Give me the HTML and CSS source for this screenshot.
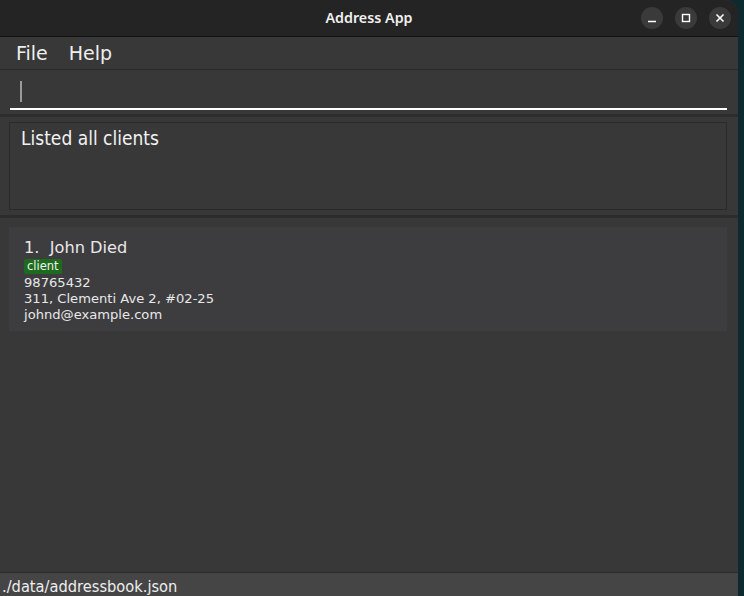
FILE: index.html
```html
<!DOCTYPE html>
<html>
<head>
<meta charset="utf-8">
<link rel="stylesheet" href="styles.css">
</head>
<body>
<div class="window">
  <div class="titlebar">
    <div class="title">Address App</div>
    <div class="controls">
      <div class="ctl"><svg width="22" height="22" viewBox="0 0 22 22"><line x1="7" y1="14.5" x2="15" y2="14.5" stroke="#fff" stroke-width="1.6"/></svg></div>
      <div class="ctl"><svg width="22" height="22" viewBox="0 0 22 22"><rect x="7.5" y="7.5" width="7" height="7" fill="none" stroke="#fff" stroke-width="1.4"/></svg></div>
      <div class="ctl"><svg width="22" height="22" viewBox="0 0 22 22"><path d="M7.5 7.5 L14.5 14.5 M14.5 7.5 L7.5 14.5" stroke="#fff" stroke-width="1.6"/></svg></div>
    </div>
  </div>
  <div class="menubar">
    <span class="menu">File</span>
    <span class="menu">Help</span>
  </div>
  <div class="command">
    <div class="field"><span class="caret"></span></div>
  </div>
  <div class="result-wrap">
    <div class="result">Listed all clients</div>
  </div>
  <div class="list">
    <div class="card">
      <div class="name">1.&nbsp; John Died</div>
      <div class="tags"><span class="tag">client</span></div>
      <div class="line">98765432</div>
      <div class="line">311, Clementi Ave 2, #02-25</div>
      <div class="line">johnd@example.com</div>
    </div>
  </div>
  <div class="status">./data/addressbook.json</div>
</div>
</body>
</html>
```
FILE: styles.css
```css
html, body {
  margin: 0;
  padding: 0;
  height: 100%;
}
body {
  background: #0c2a2f;
  font-family: "DejaVu Sans", sans-serif;
  color: #fff;
  overflow: hidden;
}
.window {
  width: 738px;
  height: 596px;
  display: flex;
  flex-direction: column;
  background: #383838;
  border-top-right-radius: 12px;
  overflow: hidden;
}
.titlebar {
  height: 36px;
  flex: none;
  background: #242424;
  border-bottom: 1px solid #111;
  display: flex;
  align-items: center;
  justify-content: center;
  position: relative;
}
.title {
  font-family: "Noto Sans", sans-serif;
  font-weight: 600;
  font-size: 14.3px;
  color: #f0f0f0;
  margin-top: -2px;
}
.controls {
  position: absolute;
  right: 7px;
  top: 7px;
  display: flex;
  gap: 12px;
}
.ctl {
  width: 22px;
  height: 22px;
  border-radius: 50%;
  background: #3a3a3a;
}
.ctl svg { display: block; }
.menubar {
  height: 32px;
  flex: none;
  display: flex;
  align-items: center;
  gap: 21px;
  padding-left: 16px;
  border-bottom: 1px solid #2a2a2a;
  background: #383838;
}
.menu {
  font-family: "DejaVu Sans", sans-serif;
  font-size: 19px;
  color: #eee;
}
.command {
  flex: none;
  padding: 0 11px 0 10px;
  border-bottom: 3px solid #2c2c2c;
  box-sizing: border-box;
  height: 47px;
}
.field {
  height: 40px;
  border-bottom: 2px solid #fff;
  box-sizing: border-box;
  display: flex;
  align-items: center;
  padding-left: 10px;
}
.caret {
  width: 2px;
  height: 21px;
  background: #9a9a9a;
  margin-top: 5px;
}
.result-wrap {
  flex: none;
  padding: 5px 11px 5px 9px;
  border-bottom: 3px solid #2c2c2c;
}
.result {
  height: 88px;
  box-sizing: border-box;
  border: 1px solid #2a2a2a;
  padding: 4px 11px;
  font-family: "DejaVu Sans Condensed", "DejaVu Sans", sans-serif;
  font-size: 19px;
  color: #f2f2f2;
}
.list {
  flex: 1;
  padding: 9px 11px 0 9px;
}
.card {
  background: #3d3d40;
  padding: 10px 15px 10px 15px;
  height: 104px;
  box-sizing: border-box;
}
.name {
  font-size: 16.2px;
  color: #e8e8e8;
  line-height: 22px;
}
.tags {
  height: 15px;
  display: flex;
  align-items: center;
  margin-bottom: 1px;
}
.tag {
  background: #1d6b1d;
  color: #f2f2f2;
  font-size: 11.5px;
  padding: 0 3px;
  border-radius: 2px;
  line-height: 15px;
}
.line {
  font-size: 13.1px;
  color: #e8e8e8;
  line-height: 16px;
}
.status {
  height: 24px;
  flex: none;
  background: #454545;
  border-top: 1px solid #2a2a2a;
  box-sizing: border-box;
  font-family: "DejaVu Sans Condensed", "DejaVu Sans", sans-serif;
  font-size: 16.3px;
  color: #eee;
  padding-left: 2px;
  line-height: 28px;
}
```
